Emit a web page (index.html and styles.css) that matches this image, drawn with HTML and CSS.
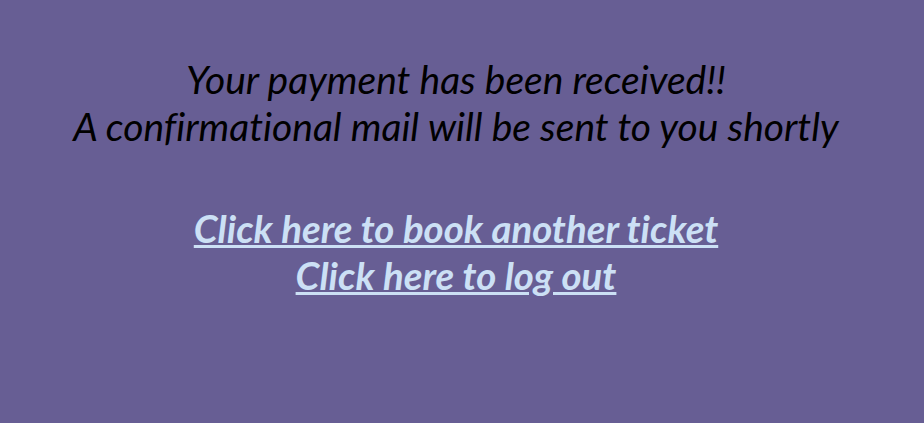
FILE: index.html
```html
<!DOCTYPE html>
<html>
<head>
<meta charset="utf-8">
<link rel="stylesheet" href="styles.css">
</head>
<body>
<div class="box">
  <p class="msg">Your payment has been received!!<br>A confirmational mail will be sent to you shortly</p>
  <p class="links"><a href="#">Click here to book another ticket</a><br><a href="#">Click here to log out</a></p>
</div>
</body>
</html>
```
FILE: styles.css
```css
html, body {
  margin: 0;
  background: #675e94;
  height: 100%;
}
.box {
  padding-top: 56px;
  padding-right: 12px;
  text-align: center;
  font-family: Lato, sans-serif;
  font-style: italic;
  font-size: 39px;
  line-height: 47px;
  font-variant-ligatures: none;
}
.msg {
  margin: 0;
  color: #000;
}
.links {
  margin: 55px 0 0;
  font-weight: bold;
  font-size: 38.4px;
  letter-spacing: 0;
}
.links a {
  color: #cce0f5;
  text-decoration: underline;
}
```
